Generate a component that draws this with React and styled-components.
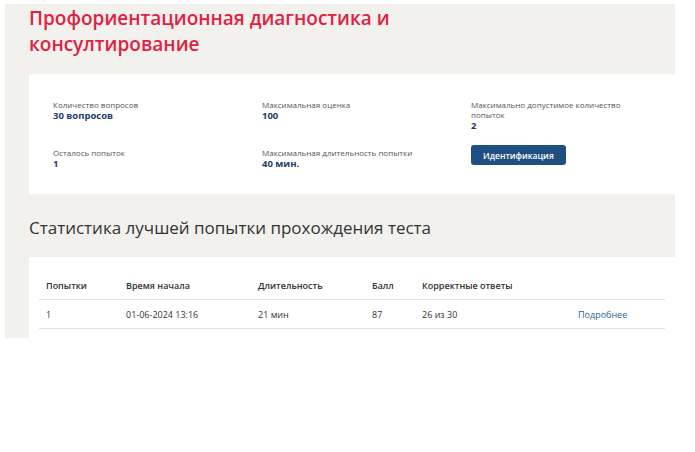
import React from "react";
import styled, { createGlobalStyle } from "styled-components";

const GlobalStyle = createGlobalStyle`
  body {
    margin: 0;
    background: #fff;
    font-family: "Open Sans", "Noto Sans", sans-serif;
  }
`;

const Page = styled.div`
  margin: 4px 0 0 5px;
  width: 670px;
  height: 334px;
  background: #f2f1ee;
  padding-left: 24px;
  box-sizing: border-box;
  overflow: hidden;
`;

const Title = styled.h1`
  margin: 0;
  padding-top: 1px;
  font-size: 19px;
  line-height: 26px;
  font-weight: 600;
  color: #e0213f;
`;

const InfoCard = styled.div`
  margin-top: 17px;
  background: #fff;
  height: 120px;
  box-sizing: border-box;
  padding: 26px 24px 0;
  display: grid;
  grid-template-columns: 209px 209px 170px;
  row-gap: 17px;
  align-content: start;
`;

const Field = styled.div`
  display: flex;
  flex-direction: column;
`;

const Label = styled.span`
  font-size: 8px;
  line-height: 10px;
  color: #555;
`;

const Value = styled.span`
  font-size: 9.5px;
  line-height: 11px;
  font-weight: 700;
  color: #1d3d66;
`;

const Button = styled.button`
  align-self: start;
  justify-self: start;
  margin-top: -3px;
  padding: 0 12px;
  height: 20px;
  border: none;
  border-radius: 3px;
  background: #1e4f80;
  color: #fff;
  font-family: inherit;
  font-size: 8.5px;
  font-weight: 600;
  cursor: pointer;
`;

const Heading = styled.h2`
  margin: 22px 0 0;
  font-size: 17px;
  line-height: 24px;
  font-weight: 400;
  color: #333;
`;

const TableCard = styled.div`
  margin-top: 17px;
  background: #fff;
  padding: 16px 10px 0;
  height: 100px;
`;

const Table = styled.table`
  width: 100%;
  border-collapse: collapse;
  font-size: 9px;
  color: #333;
`;

const Th = styled.th`
  box-sizing: border-box;
  text-align: left;
  font-weight: 600;
  padding: 6px 7px 7px;
  border-bottom: 1px solid #e3e3e3;
  width: ${(p) => p.$w || "auto"};
`;

const Td = styled.td`
  text-align: left;
  padding: 8px 7px 7px;
  border-bottom: 1px solid #e3e3e3;
`;

const Link = styled.a`
  color: #2b5f92;
  text-decoration: none;
`;

const fields = [
  ["Количество вопросов", "30 вопросов"],
  ["Максимальная оценка", "100"],
  ["Максимально допустимое количество попыток", "2"],
  ["Осталось попыток", "1"],
  ["Максимальная длительность попытки", "40 мин."],
];

export default function App() {
  return (
    <>
      <GlobalStyle />
      <Page>
        <Title>
          Профориентационная диагностика и
          <br />
          консултирование
        </Title>
        <InfoCard>
          {fields.map(([l, v]) => (
            <Field key={l}>
              <Label>{l}</Label>
              <Value>{v}</Value>
            </Field>
          ))}
          <Button>Идентификация</Button>
        </InfoCard>
        <Heading>Статистика лучшей попытки прохождения теста</Heading>
        <TableCard>
          <Table>
            <thead>
              <tr>
                <Th $w="80px">Попытки</Th>
                <Th $w="132px">Время начала</Th>
                <Th $w="114px">Длительность</Th>
                <Th $w="50px">Балл</Th>
                <Th $w="156px">Корректные ответы</Th>
                <Th></Th>
              </tr>
            </thead>
            <tbody>
              <tr>
                <Td>1</Td>
                <Td>01-06-2024 13:16</Td>
                <Td>21 мин</Td>
                <Td>87</Td>
                <Td>26 из 30</Td>
                <Td>
                  <Link href="#">Подробнее</Link>
                </Td>
              </tr>
            </tbody>
          </Table>
        </TableCard>
      </Page>
    </>
  );
}
